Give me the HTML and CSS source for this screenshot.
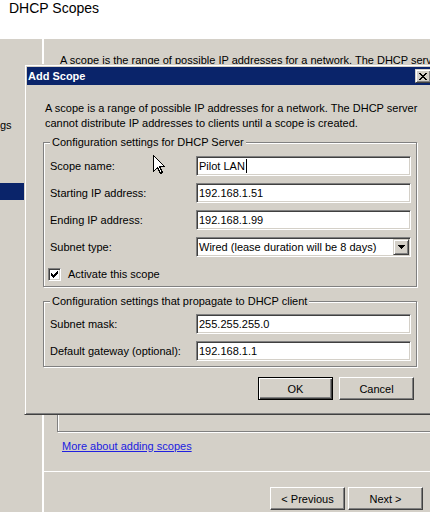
FILE: index.html
```html
<!DOCTYPE html>
<html lang="en">
<head>
<meta charset="utf-8">
<title>DHCP Scopes</title>
<link rel="stylesheet" href="styles.css">
</head>
<body>
<div class="screen">
  <header class="top">
    <h1 class="top-title">DHCP Scopes</h1>
  </header>
  <div class="main">
    <nav class="side">
      <div class="side-item">gs</div>
      <div class="side-sel"></div>
    </nav>
    <main class="wiz">
      <p class="wiz-intro">A scope is the range of possible IP addresses for a network. The DHCP server</p>
      <div class="wiz-frame"></div>
      <a class="wiz-link" href="#">More about adding scopes</a>
      <div class="wiz-foot">
        <button class="btn">&lt; Previous</button>
        <button class="btn">Next &gt;</button>
      </div>
    </main>
  </div>

  <section class="dialog">
    <div class="titlebar">
      <h2 class="titlebar-text">Add Scope</h2>
      <span class="raised close">
        <svg width="8" height="7" viewBox="0 0 8 7" shape-rendering="crispEdges"><path d="M0 0h2v1h-2z M6 0h2v1h-2z M1 1h2v1h-2z M5 1h2v1h-2z M2 2h4v1h-4z M3 3h2v1h-2z M2 4h4v1h-4z M1 5h2v1h-2z M5 5h2v1h-2z M0 6h2v1h-2z M6 6h2v1h-2z" fill="#000"/></svg>
      </span>
    </div>
    <div class="dlg-body">
      <p class="dlg-intro">A scope is a range of possible IP addresses for a network. The DHCP server<br>cannot distribute IP addresses to clients until a scope is created.</p>

      <section class="group">
        <h3 class="group-label">Configuration settings for DHCP Server</h3>
        <div class="form">
          <span class="label">Scope name:</span>
          <div class="field">Pilot LAN<span class="caret"></span></div>
          <span class="label">Starting IP address:</span>
          <div class="field">192.168.1.51</div>
          <span class="label">Ending IP address:</span>
          <div class="field">192.168.1.99</div>
          <span class="label">Subnet type:</span>
          <div class="field select">
            <span>Wired (lease duration will be 8 days)</span>
            <span class="raised drop">
              <svg width="7" height="4" viewBox="0 0 7 4" shape-rendering="crispEdges"><path d="M0 0h7v1h-1v1h-1v1h-1v1h-1v-1h-1v-1h-1v-1h-1z" fill="#000"/></svg>
            </span>
          </div>
        </div>
        <div class="check-row">
          <span class="check">
            <svg width="7" height="7" viewBox="0 0 7 7" shape-rendering="crispEdges"><path d="M0 2h1v3h-1z M1 3h1v3h-1z M2 4h1v3h-1z M3 3h1v3h-1z M4 2h1v3h-1z M5 1h1v3h-1z M6 0h1v3h-1z" fill="#000"/></svg>
          </span>
          <span>Activate this scope</span>
        </div>
      </section>

      <section class="group group-client">
        <h3 class="group-label">Configuration settings that propagate to DHCP client</h3>
        <div class="form">
          <span class="label">Subnet mask:</span>
          <div class="field">255.255.255.0</div>
          <span class="label">Default gateway (optional):</span>
          <div class="field">192.168.1.1</div>
        </div>
      </section>

      <div class="dlg-buttons">
        <button class="btn btn-default">OK</button>
        <button class="btn">Cancel</button>
      </div>
    </div>
  </section>

  <svg class="cursor" width="13" height="20" viewBox="0 0 13 20" shape-rendering="crispEdges"><path d="M0.5 0.5 L0.5 16.5 L4.5 12.5 L7.5 18.5 L9.5 17.5 L6.5 11.5 L11.5 11.5 Z" fill="#fff" stroke="#000" stroke-width="1"/></svg>
</div>
</body>
</html>
```

FILE: styles.css
```css
* { box-sizing: border-box; }

html, body {
  margin: 0;
  padding: 0;
}

body {
  width: 430px;
  height: 512px;
  overflow: hidden;
  font-family: "Liberation Sans", Arial, sans-serif;
  font-size: 11px;
  color: #000;
  background: #d4d0c8;
}

.screen {
  position: relative;
  width: 430px;
  height: 512px;
  overflow: hidden;
  background: #d4d0c8;
  display: flex;
  flex-direction: column;
}

/* header */
.top {
  flex: none;
  height: 39px;
  background: #fff;
}

.top-title {
  margin: 0;
  padding-left: 9px;
  font-size: 14px;
  font-weight: normal;
  line-height: 16px;
}

/* main area */
.main {
  flex: 1;
  display: flex;
  min-height: 0;
}

.side {
  flex: none;
  width: 44px;
  border-right: 2px solid #fff;
  padding-top: 80px;
}

.side-item {
  line-height: 13px;
  white-space: nowrap;
}

.side-sel {
  margin-top: 51px;
  height: 17px;
  background: #0a246a;
}

.wiz {
  flex: 1;
  min-width: 0;
  display: flex;
  flex-direction: column;
}

.wiz-intro {
  margin: 15px 0 0 16px;
  line-height: 13px;
  white-space: nowrap;
}

.wiz-frame {
  flex: none;
  margin: 10px -20px 0 13px;
  height: 355px;
  border: 1px solid #808080;
  box-shadow: inset 1px 1px 0 #fff, 1px 1px 0 #fff;
}

.wiz-link {
  align-self: flex-start;
  margin: 8px 0 0 18px;
  line-height: 13px;
  color: #2020e0;
  text-decoration: underline;
}

.wiz-foot {
  margin-top: 18px;
  border-top: 1px solid #fff;
  padding: 15px 7px 0 0;
  display: flex;
  justify-content: flex-end;
  gap: 3px;
}

/* buttons */
.btn {
  width: 75px;
  height: 23px;
  padding: 0;
  font: inherit;
  color: #000;
  background: #d4d0c8;
  border: 1px solid;
  border-color: #fff #404040 #404040 #fff;
  box-shadow: inset -1px -1px 0 #808080;
  border-radius: 0;
}

.btn-default {
  border-color: #000;
  box-shadow: inset 1px 1px 0 #fff, inset -1px -1px 0 #404040, inset -2px -2px 0 #808080;
}

.raised {
  display: flex;
  align-items: center;
  justify-content: center;
  background: #d4d0c8;
  border: 1px solid;
  border-color: #d4d0c8 #404040 #404040 #d4d0c8;
  box-shadow: inset 1px 1px 0 #fff, inset -1px -1px 0 #808080;
}

/* dialog */
.dialog {
  position: absolute;
  left: 24px;
  top: 64px;
  width: 412px;
  height: 351px;
  padding: 2px;
  background: #d4d0c8;
  border: 1px solid;
  border-color: #d4d0c8 #404040 #404040 #d4d0c8;
  box-shadow: inset 1px 1px 0 #fff, inset -1px -1px 0 #808080;
  display: flex;
  flex-direction: column;
}

.titlebar {
  flex: none;
  height: 18px;
  background: #0a246a;
  display: flex;
  align-items: center;
  justify-content: space-between;
  padding-left: 1px;
}

.titlebar-text {
  margin: 0;
  font-size: 11px;
  font-weight: bold;
  line-height: 13px;
  color: #fff;
}

.close {
  width: 16px;
  height: 14px;
  margin-right: 2px;
}

.dlg-body {
  padding: 0 16px;
}

.dlg-intro {
  margin: 16px 0 0 2px;
  line-height: 15px;
  white-space: nowrap;
}

.group {
  margin-top: 11px;
  padding: 0 5px 5px 6px;
  border: 1px solid #808080;
  box-shadow: inset 1px 1px 0 #fff, 1px 1px 0 #fff;
}

.group-client {
  margin-top: 14px;
}

.group-label {
  display: table;
  margin: -7px 0 0 0;
  padding: 0 2px;
  font-size: 11px;
  font-weight: normal;
  line-height: 13px;
  background: #d4d0c8;
}

.form {
  margin-top: 7px;
  display: grid;
  grid-template-columns: 146px 215px;
  grid-auto-rows: 20px;
  row-gap: 7px;
  align-items: center;
}

.group-client .form {
  margin-top: 6px;
}

.label {
  line-height: 13px;
  white-space: nowrap;
}

.field {
  height: 20px;
  display: flex;
  align-items: center;
  padding-left: 2px;
  background: #fff;
  border: 1px solid;
  border-color: #808080 #fff #fff #808080;
  box-shadow: inset 1px 1px 0 #404040, inset -1px -1px 0 #d4d0c8;
  white-space: nowrap;
  overflow: hidden;
}

.caret {
  display: inline-block;
  width: 1px;
  height: 14px;
  margin-left: 1px;
  background: #000;
}

.select {
  padding-right: 1px;
}

.drop {
  margin-left: auto;
  width: 16px;
  height: 16px;
}

.check-row {
  margin: 11px 0 0 -2px;
  display: flex;
  align-items: center;
  gap: 7px;
  line-height: 13px;
}

.check {
  width: 13px;
  height: 13px;
  display: flex;
  align-items: center;
  justify-content: center;
  background: #fff;
  border: 1px solid;
  border-color: #808080 #fff #fff #808080;
  box-shadow: inset 1px 1px 0 #404040, inset -1px -1px 0 #d4d0c8;
}

.dlg-buttons {
  margin-top: 10px;
  padding-right: 3px;
  display: flex;
  justify-content: flex-end;
  gap: 6px;
}

.cursor {
  position: absolute;
  left: 153px;
  top: 155px;
}
```
